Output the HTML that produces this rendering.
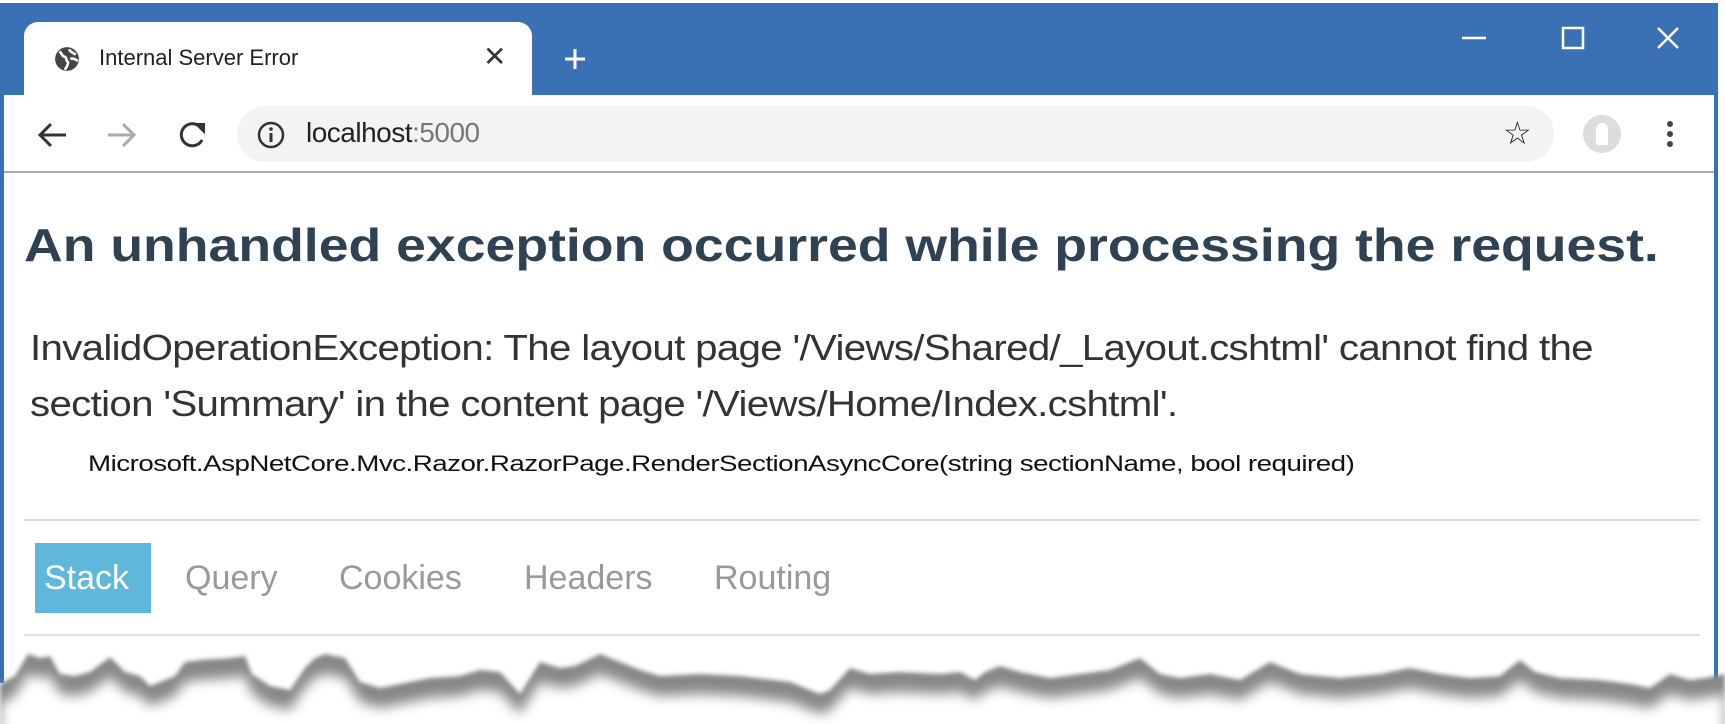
<!DOCTYPE html>
<html><head><meta charset="utf-8"><style>
*{margin:0;padding:0;box-sizing:border-box}
body{width:1725px;height:724px;background:#fff;position:relative;overflow:hidden;font-family:"Liberation Sans",sans-serif}
.abs{position:absolute}
.sx{transform-origin:0 0;white-space:nowrap}
</style></head><body>
<div class="abs" style="left:0;top:3px;width:1718px;height:92px;background:#3a71b5"></div>
<div class="abs" style="left:0;top:3px;width:4px;height:680px;background:#3a71b5"></div>
<div class="abs" style="left:1714px;top:3px;width:4px;height:680px;background:#3a71b5"></div>
<div class="abs" style="left:4px;top:95px;width:1710px;height:600px;background:#fff"></div>
<div class="abs" style="left:24px;top:22px;width:508px;height:75px;background:#fff;border-radius:14px 14px 0 0"></div>
<svg class="abs" style="left:54px;top:46px" width="26" height="26" viewBox="0 0 24 24"><circle cx="12" cy="12" r="11" fill="#444"/><path d="M5 5 C8 7 7 10 10 10 C12 11 11 14 13 15 C13 18 11 20 10 22 M14 3 C15 6 18 6 20 8 M15 12 C17 11 20 12 22 14" stroke="#fff" stroke-width="2.4" fill="none"/></svg>
<div class="abs" style="left:99px;top:45px;font-size:22px;color:#222">Internal Server Error</div>
<div class="abs" style="left:483px;top:40px;font-size:28px;color:#333">✕</div>
<svg class="abs" style="left:563px;top:47px" width="24" height="24"><path d="M12 2V22M2 12H22" stroke="#fff" stroke-width="3"/></svg>
<svg class="abs" style="left:1462px;top:26px" width="230" height="24"><path d="M0 12H24" stroke="#fff" stroke-width="2.5"/><rect x="101" y="2" width="20" height="20" fill="none" stroke="#fff" stroke-width="2.5"/><path d="M196 2L216 22M216 2L196 22" stroke="#fff" stroke-width="2.5"/></svg>
<svg class="abs" style="left:36px;top:120px" width="180" height="30"><path d="M30 15H4M15 4L4 15L15 26" stroke="#333" stroke-width="3" fill="none"/><path d="M72 15H98M87 4L98 15L87 26" stroke="#aaa" stroke-width="3" fill="none"/><path d="M165 8A11 11 0 1 0 166 20" stroke="#333" stroke-width="3" fill="none"/><path d="M160 4L168 4L168 12Z" fill="#333" stroke="#333" stroke-width="2"/></svg>
<div class="abs" style="left:237px;top:106px;width:1317px;height:56px;background:#f1f3f4;border-radius:28px"></div>
<svg class="abs" style="left:257px;top:121px" width="28" height="28"><circle cx="14" cy="14" r="12" fill="none" stroke="#333" stroke-width="2.5"/><path d="M14 12V21" stroke="#333" stroke-width="3"/><circle cx="14" cy="8" r="1.8" fill="#333"/></svg>
<div class="abs" style="left:306px;top:117px;font-size:28px;color:#222;letter-spacing:-0.5px">localhost<span style="color:#777">:5000</span></div>
<div class="abs" style="left:1503px;top:114px;font-size:32px;color:#222">☆</div>
<div class="abs" style="left:1583px;top:115px;width:38px;height:38px;border-radius:50%;background:#ddd"></div>
<div class="abs" style="left:1596px;top:123px;width:12px;height:22px;border-radius:6px 6px 2px 2px;background:#fff"></div>
<svg class="abs" style="left:1664px;top:120px" width="12" height="30"><circle cx="6" cy="4" r="3" fill="#444"/><circle cx="6" cy="14" r="3" fill="#444"/><circle cx="6" cy="24" r="3" fill="#444"/></svg>
<div class="abs" style="left:4px;top:171px;width:1710px;height:2px;background:#aaa"></div>
<div class="abs sx" style="left:24px;top:218px;font-size:46px;font-weight:bold;color:#2f4254;transform:scaleX(1.165)">An unhandled exception occurred while processing the request.</div>
<div class="abs sx" style="left:30px;top:320px;font-size:36px;line-height:56px;color:#333;letter-spacing:-0.6px;transform:scaleX(1.118)">InvalidOperationException: The layout page '/Views/Shared/_Layout.cshtml' cannot find the<br>section 'Summary' in the content page '/Views/Home/Index.cshtml'.</div>
<div class="abs sx" style="left:88px;top:451px;font-size:22px;color:#111;letter-spacing:-0.4px;transform:scaleX(1.26)">Microsoft.AspNetCore.Mvc.Razor.RazorPage.RenderSectionAsyncCore(string sectionName, bool required)</div>
<div class="abs" style="left:24px;top:519px;width:1676px;height:2px;background:#ddd"></div>
<div class="abs" style="left:35px;top:543px;width:116px;height:70px;background:#5fb8dc"></div>
<div class="abs" style="left:44px;top:559px;font-size:34px;color:#fff">Stack</div>
<div class="abs" style="left:185px;top:559px;font-size:34px;color:#999">Query</div>
<div class="abs" style="left:339px;top:559px;font-size:34px;color:#999">Cookies</div>
<div class="abs" style="left:524px;top:559px;font-size:34px;color:#999">Headers</div>
<div class="abs" style="left:714px;top:559px;font-size:34px;color:#999">Routing</div>
<div class="abs" style="left:24px;top:634px;width:1676px;height:2px;background:#ddd"></div>
<svg class="abs" style="left:0;top:640px" width="1725" height="84">
<defs><filter id="b" x="-5%" y="-50%" width="110%" height="200%"><feGaussianBlur stdDeviation="6"/></filter>
<filter id="b2"><feGaussianBlur stdDeviation="2"/></filter></defs>
<g transform="translate(0,14)">
<path d="M0 84 L0 30 L15 22 L28 0 L40 4 L50 2 L60 20 L75 22 L90 18 L110 3 L125 18 L140 22 L150 32 L175 22 L185 8 L200 6 L230 4 L245 2 L252 20 L270 32 L290 36 L305 14 L315 4 L325 0 L345 4 L360 28 L380 34 L400 30 L430 24 L460 22 L480 16 L500 18 L520 40 L540 8 L560 14 L575 12 L600 0 L615 6 L640 16 L660 22 L700 20 L740 22 L790 28 L820 40 L830 36 L850 14 L870 20 L900 18 L940 20 L960 18 L975 26 L985 18 L1000 12 L1020 18 L1050 24 L1080 20 L1110 16 L1140 4 L1160 20 L1180 24 L1210 20 L1240 26 L1270 8 L1300 20 L1340 24 L1380 20 L1410 14 L1440 20 L1470 24 L1500 22 L1520 6 L1535 18 L1560 24 L1600 26 L1630 30 L1650 34 L1670 20 L1690 26 L1705 24 L1725 20 L1725 84 Z" fill="#888" filter="url(#b2)"/>
<path d="M0 120 L0 30 L15 22 L28 0 L40 4 L50 2 L60 20 L75 22 L90 18 L110 3 L125 18 L140 22 L150 32 L175 22 L185 8 L200 6 L230 4 L245 2 L252 20 L270 32 L290 36 L305 14 L315 4 L325 0 L345 4 L360 28 L380 34 L400 30 L430 24 L460 22 L480 16 L500 18 L520 40 L540 8 L560 14 L575 12 L600 0 L615 6 L640 16 L660 22 L700 20 L740 22 L790 28 L820 40 L830 36 L850 14 L870 20 L900 18 L940 20 L960 18 L975 26 L985 18 L1000 12 L1020 18 L1050 24 L1080 20 L1110 16 L1140 4 L1160 20 L1180 24 L1210 20 L1240 26 L1270 8 L1300 20 L1340 24 L1380 20 L1410 14 L1440 20 L1470 24 L1500 22 L1520 6 L1535 18 L1560 24 L1600 26 L1630 30 L1650 34 L1670 20 L1690 26 L1705 24 L1725 20 L1725 120 Z" fill="#fff" filter="url(#b)" transform="translate(0,20)"/>
</g>
</svg>
</body></html>
